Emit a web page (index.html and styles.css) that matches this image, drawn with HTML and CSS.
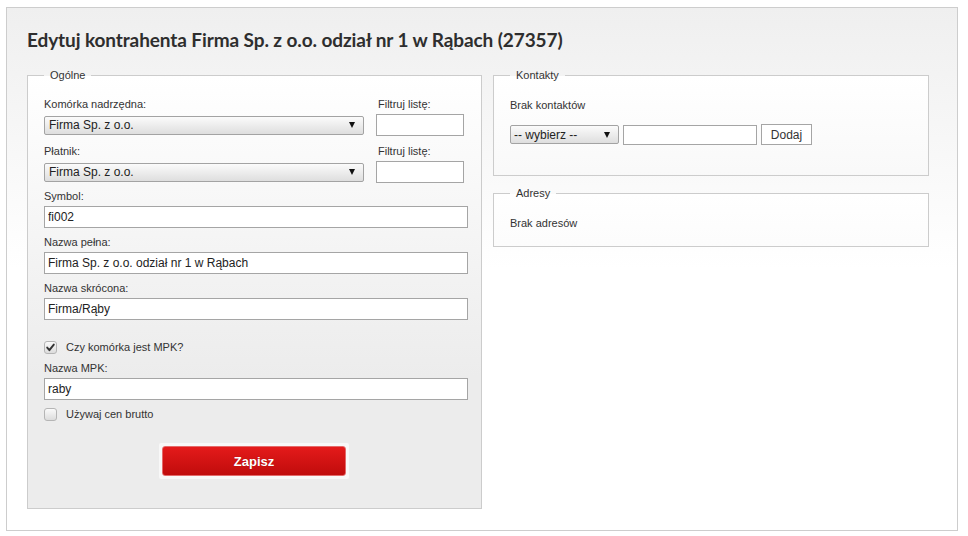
FILE: index.html
```html
<!DOCTYPE html>
<html lang="pl">
<head>
<meta charset="utf-8">
<title>Edytuj kontrahenta</title>
<link rel="stylesheet" href="styles.css">
</head>
<body>
<div class="panel">
  <h1 class="title">Edytuj kontrahenta Firma Sp. z o.o. odział nr 1 w Rąbach (27357)</h1>
  <div class="columns">
    <fieldset class="box box-main">
      <legend>Ogólne</legend>
      <div class="pick pick-first">
        <label class="lbl">Komórka nadrzędna:</label>
        <label class="lbl lbl-filter">Filtruj listę:</label>
        <div class="select select-wide"><span>Firma Sp. z o.o.</span><i class="arrow"></i></div>
        <input class="text filter" type="text">
      </div>
      <div class="pick">
        <label class="lbl">Płatnik:</label>
        <label class="lbl lbl-filter">Filtruj listę:</label>
        <div class="select select-wide"><span>Firma Sp. z o.o.</span><i class="arrow"></i></div>
        <input class="text filter" type="text">
      </div>
      <div class="field">
        <label class="lbl">Symbol:</label>
        <input class="text full" type="text" value="fi002">
      </div>
      <div class="field">
        <label class="lbl">Nazwa pełna:</label>
        <input class="text full" type="text" value="Firma Sp. z o.o. odział nr 1 w Rąbach">
      </div>
      <div class="field">
        <label class="lbl">Nazwa skrócona:</label>
        <input class="text full" type="text" value="Firma/Rąby">
      </div>
      <div class="check check-mpk">
        <span class="cb"><svg viewBox="0 0 13 13" width="13" height="13"><path d="M3.2 6.6 L5.4 9.2 L9.8 3.6" fill="none" stroke="#333" stroke-width="1.9" stroke-linecap="round" stroke-linejoin="round"/></svg></span>
        <span>Czy komórka jest MPK?</span>
      </div>
      <div class="field field-mpk">
        <label class="lbl">Nazwa MPK:</label>
        <input class="text full" type="text" value="raby">
      </div>
      <div class="check check-brutto">
        <span class="cb"></span>
        <span>Używaj cen brutto</span>
      </div>
      <div class="actions">
        <div class="btn-frame"><button class="btn-save" type="button">Zapisz</button></div>
      </div>
    </fieldset>
    <div class="side">
      <fieldset class="box box-contacts">
        <legend>Kontakty</legend>
        <p class="empty">Brak kontaktów</p>
        <div class="add-row">
          <div class="select select-type"><span>-- wybierz --</span><i class="arrow"></i></div>
          <input class="text contact-input" type="text">
          <button class="btn-add" type="button">Dodaj</button>
        </div>
      </fieldset>
      <fieldset class="box box-address">
        <legend>Adresy</legend>
        <p class="empty">Brak adresów</p>
      </fieldset>
    </div>
  </div>
</div>
</body>
</html>
```
FILE: styles.css
```css
html, body {
  margin: 0;
  padding: 0;
  background: #fff;
}
body {
  font-family: "Liberation Sans", Arial, sans-serif;
  color: #333;
  font-size: 11px;
}
.panel {
  margin: 7px 10px 0 6px;
  height: 524px;
  box-sizing: border-box;
  border: 1px solid #cdcdcd;
  background: linear-gradient(#efefef, #fff 260px);
  padding: 20px 28px 0 20px;
}
.title {
  margin: 0;
  font: 700 19px/24px Lato, "DejaVu Sans", sans-serif;
  color: #2e2e2e;
  letter-spacing: -0.1px;
}
.columns {
  display: flex;
  gap: 11px;
  margin-top: 16px;
  align-items: flex-start;
}
.box {
  margin: 0;
  min-width: 0;
  border: 1px solid #ccc;
  background: linear-gradient(#fff, #ececec 300px);
  box-sizing: border-box;
}
.box legend {
  padding: 0 6px;
  font-size: 11px;
  line-height: 14px;
  color: #333;
}
.box-main {
  width: 455px;
  padding: 15px 13px 29px 16px;
}
.side {
  width: 436px;
  display: flex;
  flex-direction: column;
  gap: 10px;
}
.box-contacts {
  padding: 16px 16px 30px 16px;
}
.box-address {
  padding: 16px 16px 16px 16px;
}
.lbl {
  display: block;
  line-height: 14px;
  margin-bottom: 3px;
  color: #333;
}
.pick {
  display: grid;
  grid-template-columns: 320px 88px;
  column-gap: 12px;
  align-items: center;
  margin-bottom: 6px;
}
.pick-first {
  margin-bottom: 8px;
}
.lbl-filter {
  padding-left: 2px;
}
.field {
  margin-bottom: 7px;
}
.text {
  display: block;
  box-sizing: border-box;
  height: 22px;
  margin: 0;
  border: 1px solid #a5a5a5;
  background: #fff;
  font: 12px "Liberation Sans", Arial, sans-serif;
  color: #222;
  padding: 0 3px;
  outline: none;
}
.full {
  width: 424px;
}
.filter {
  width: 88px;
}
.select {
  box-sizing: border-box;
  height: 19px;
  border: 1px solid #a3a3a3;
  border-radius: 2px;
  background: linear-gradient(#fbfbfb, #dedede);
  display: flex;
  align-items: center;
  justify-content: space-between;
  padding: 0 8px 0 4px;
  font-size: 12px;
  color: #222;
}
.arrow {
  width: 0;
  height: 0;
  border-left: 3.5px solid transparent;
  border-right: 3.5px solid transparent;
  border-top: 6px solid #111;
}
.check {
  display: flex;
  align-items: center;
  gap: 9px;
  height: 16px;
  font-size: 11px;
}
.check-mpk {
  margin-top: 19px;
  margin-bottom: 6px;
}
.field-mpk {
  margin-bottom: 6px;
}
.cb {
  width: 13px;
  height: 13px;
  box-sizing: border-box;
  border: 1px solid #b5b5b5;
  border-radius: 3px;
  background: linear-gradient(#fafafa, #dcdcdc);
  display: flex;
}
.cb svg {
  margin: -1px;
}
.actions {
  display: flex;
  justify-content: center;
  margin-top: 21px;
  padding-right: 4px;
}
.btn-frame {
  padding: 3px;
  background: #f8f8f8;
  border-radius: 2px;
}
.btn-save {
  display: block;
  width: 184px;
  height: 30px;
  margin: 0;
  border: 1px solid #e46a6a;
  border-radius: 3px;
  background: linear-gradient(#e41a1a, #c00c0c);
  color: #fff;
  font: 700 13px "Liberation Sans", Arial, sans-serif;
  text-shadow: 0 0 1px rgba(80, 0, 0, 0.4);
  cursor: pointer;
}
.empty {
  margin: 0;
  line-height: 14px;
  font-size: 11px;
}
.add-row {
  display: flex;
  align-items: center;
  gap: 4px;
  margin-top: 12px;
}
.select-type {
  width: 109px;
  padding-left: 3px;
}
.contact-input {
  width: 134px;
  height: 20px;
}
.btn-add {
  box-sizing: border-box;
  width: 51px;
  height: 21px;
  margin: 0;
  border: 1px solid #a5a5a5;
  background: #fff;
  font: 12px "Liberation Sans", Arial, sans-serif;
  color: #333;
  padding: 0;
}
```
